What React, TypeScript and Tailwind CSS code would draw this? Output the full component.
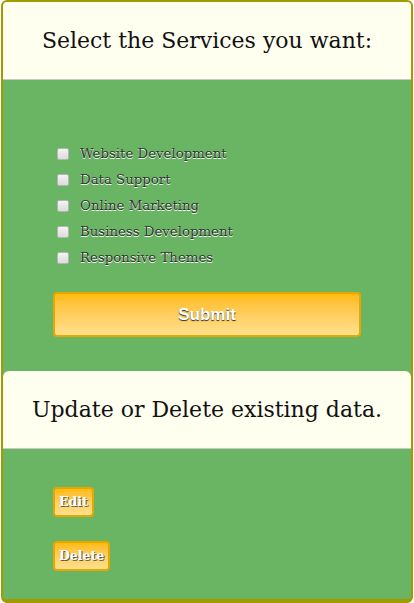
const services = [
  "Website Development",
  "Data Support",
  "Online Marketing",
  "Business Development",
  "Responsive Themes",
];

const serif = { fontFamily: '"DejaVu Serif", "Liberation Serif", serif' };

function Header({ title, rounded }: { title: string; rounded?: boolean }) {
  return (
    <div
      className={`flex h-[78px] items-center justify-center border-b border-[#c8c8c8] bg-[#fffff0] text-[22px] text-[#111] ${rounded ? "rounded-t-[6px]" : ""}`}
      style={serif}
    >
      {title}
    </div>
  );
}

function SmallButton({ label }: { label: string }) {
  return (
    <button
      className="h-[30px] rounded-[4px] border-2 border-[#e6a800] bg-gradient-to-b from-[#ffbb00] to-[#ffe08c] px-[4px] text-[12.5px] font-bold text-white [text-shadow:1px_1px_0_#5a5a5a]"
      style={serif}
    >
      {label}
    </button>
  );
}

export default function App() {
  return (
    <div className="ml-px h-[603px] w-[412px] overflow-hidden rounded-[6px] border-x-2 border-t-2 border-b-[4px] border-[#a09c00] bg-[#69b563]">
      <Header title="Select the Services you want:" />
      <div className="px-[50px] pt-[61px] pb-[34px]">
        <ul>
          {services.map((s) => (
            <li key={s} className="flex h-[26px] items-center gap-[11px] pl-[4px]">
              <span className="h-[12px] w-[12px] rounded-[2px] border border-[#b5b5b5] bg-gradient-to-b from-[#f4f4f4] to-[#dcdcdc]" />
              <span
                className="text-[13.3px] text-[#333] [text-shadow:0_1px_0_#ffffff]"
                style={serif}
              >
                {s}
              </span>
            </li>
          ))}
        </ul>
        <button
          className="mt-[21px] h-[45px] w-full rounded-[4px] border-2 border-[#e6a800] bg-gradient-to-b from-[#ffbb00] to-[#ffe08c] text-[17px] font-bold text-white [text-shadow:0_1px_1px_#2a2a2a]"
          style={{ fontFamily: '"Liberation Sans", Arial, sans-serif' }}
        >
          Submit
        </button>
      </div>
      <Header title="Update or Delete existing data." rounded />
      <div className="flex flex-col items-start gap-[24px] px-[50px] pt-[38px]">
        <SmallButton label="Edit" />
        <SmallButton label="Delete" />
      </div>
    </div>
  );
}
